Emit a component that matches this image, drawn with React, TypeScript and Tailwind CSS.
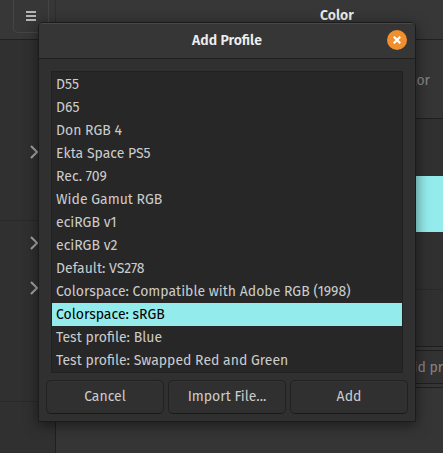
import { useState } from 'react';

const profiles = [
  'D55',
  'D65',
  'Don RGB 4',
  'Ekta Space PS5',
  'Rec. 709',
  'Wide Gamut RGB',
  'eciRGB v1',
  'eciRGB v2',
  'Default: VS278',
  'Colorspace: Compatible with Adobe RGB (1998)',
  'Colorspace: sRGB',
  'Test profile: Blue',
  'Test profile: Swapped Red and Green',
];

function Chevron() {
  return (
    <svg viewBox="0 0 8 14" className="h-[14px] w-2" fill="none" stroke="#a6a6a6" strokeWidth="2">
      <path d="M1 1l6 6-6 6" />
    </svg>
  );
}

function Sidebar() {
  return (
    <nav className="flex w-14 shrink-0 flex-col border-r border-[#202020] bg-[#303030]">
      <div className="flex h-[181px] items-end justify-end border-b border-[#292929] pr-[17px] pb-[61px]">
        <Chevron />
      </div>
      <div className="flex h-[181px] flex-col items-end gap-[31px] border-b border-[#292929] pt-[15px] pr-[17px]">
        <Chevron />
        <Chevron />
      </div>
    </nav>
  );
}

function ColorPanel() {
  return (
    <main className="flex min-w-0 flex-1 flex-col overflow-hidden bg-[#353535]">
      <div className="flex h-[79px] items-center justify-end border-b border-[#1f1f1f] pt-1 pr-[13px] text-[#858585]">
        Color
      </div>
      <div className="flex h-[228px] flex-col border-b border-[#1f1f1f] bg-[#303030]">
        <div className="h-[57px]" />
        <div className="h-14 bg-[#94ebeb]" />
        <div className="h-[58px] border-b border-[#292929]" />
      </div>
      <div className="mt-[3px] flex h-[34px] items-center border-y border-[#1f1f1f] bg-[#323232] pt-px pl-[345px] whitespace-nowrap text-[#858585]">
        <button type="button">Add profile</button>
      </div>
      <div className="mt-[3px] flex-1 border-t border-[#1f1f1f]" />
    </main>
  );
}

export default function App() {
  const [selected, setSelected] = useState(10);
  const button =
    "h-[34px] flex-1 rounded-[5px] border border-[#212121] border-b-[#191919] bg-[#303030] text-center shadow-[inset_0_1px_0_#343434]";

  return (
    <div className="relative flex h-screen flex-col overflow-hidden bg-[#303030] font-['Fira_Sans','Noto_Sans',sans-serif] text-sm text-[#cccccc]">
      <header className="flex h-10 shrink-0 border-b border-[#202020] bg-[#373737]">
        <div className="flex w-14 shrink-0 justify-end border-r border-[#2e2e2e] pr-[6px]">
          <button
            type="button"
            aria-label="Menu"
            className="flex h-[33px] w-9 items-center justify-center rounded-b-[5px] border border-t-0 border-[#454545]"
          >
            <svg viewBox="0 0 10 10" className="h-[10px] w-[10px]" fill="#b5b5b5">
              <path d="M0 0h10v2H0zM0 4h10v2H0zM0 8h10v2H0z" />
            </svg>
          </button>
        </div>
        <h1 className="h-[31px] pl-[264px] leading-[31px] font-semibold text-[#eeeeee]">Color</h1>
      </header>
      <div className="flex flex-1">
        <Sidebar />
        <ColorPanel />
      </div>

      <div className="absolute inset-0 pt-[22px] pr-[27px] pl-[38px]">
        <section
          role="dialog"
          aria-label="Add Profile"
          className="overflow-hidden rounded-t-[5px] border border-[#1c1c1c] bg-[#303030] shadow-[0_3px_14px_rgba(0,0,0,0.5)]"
        >
          <header className="grid h-9 grid-cols-[1fr_auto_1fr] items-center border-b border-[#202020] bg-[#363636] px-2 pb-px shadow-[inset_0_1px_0_#484848]">
            <span />
            <h2 className="pt-[2px] font-semibold text-[#eeeeee]">Add Profile</h2>
            <button
              type="button"
              aria-label="Close"
              className="flex size-5 items-center justify-center justify-self-end rounded-full bg-[#f18f2e]"
            >
              <svg viewBox="0 0 8 8" className="size-2" stroke="#fff" strokeWidth="2.2">
                <path d="M.7.7l6.6 6.6M7.3.7L.7 7.3" />
              </svg>
            </button>
          </header>
          <ul role="listbox" aria-label="Profiles" className="mx-3 mt-3 border border-[#212121] bg-[#272727] pt-px">
            {profiles.map((name, i) => (
              <li
                key={name}
                role="option"
                aria-selected={i === selected}
                onClick={() => setSelected(i)}
                className={
                  i === selected
                    ? 'h-[23px] truncate bg-[#94ebeb] px-1 leading-[23px] text-black'
                    : 'h-[23px] truncate px-1 leading-[23px]'
                }
              >
                {name}
              </li>
            ))}
          </ul>
          <footer className="flex gap-1 px-[7px] pt-[7px] pb-[7px]">
            <button type="button" className={button}>Cancel</button>
            <button type="button" className={button}>Import File...</button>
            <button type="button" className={button}>Add</button>
          </footer>
        </section>
      </div>
    </div>
  );
}
